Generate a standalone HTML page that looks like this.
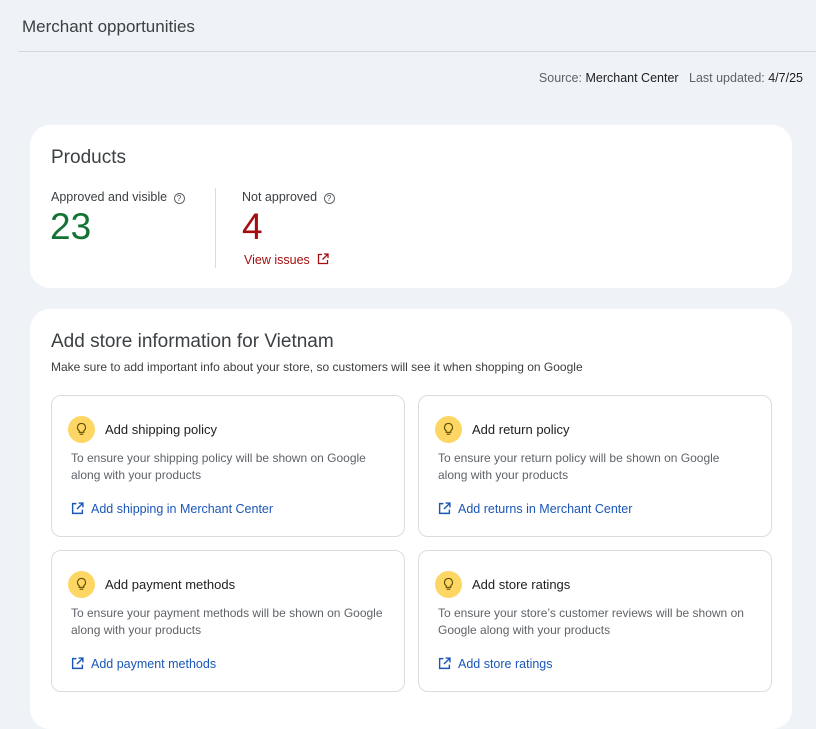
<!DOCTYPE html>
<html><head><meta charset="utf-8"><style>
*{box-sizing:border-box;margin:0;padding:0}
body{width:816px;height:709px;overflow:hidden;background:#eff2f7;font-family:"Liberation Sans",sans-serif;color:#202124;position:relative}
.abs{position:absolute;white-space:nowrap}
.card{position:absolute;background:#fff;border-radius:20px;left:30px;width:762px}
.ic{position:absolute;background:#fff;border:1px solid #dadce0;border-radius:10px;width:354px;height:142px}
.ic .circ{position:absolute;left:16px;top:20px;width:27px;height:27px;border-radius:50%;background:#fdd663}
.ic .circ svg{position:absolute;left:7px;top:6px}
.ic .h{position:absolute;left:53px;top:26px;font-size:13px;color:#202124}
.ic .b{position:absolute;left:19px;top:54px;font-size:12px;color:#5f6368;line-height:17px;width:315px}
.ic .l{position:absolute;left:19px;top:106px;font-size:12.5px;color:#1a56b8;white-space:nowrap}
.ic .l svg{vertical-align:-2px;margin-right:7px}
</style></head><body>
<div class="abs" style="left:22px;top:17px;font-size:17px;color:#3c4043">Merchant opportunities</div>
<div class="abs" style="left:18px;top:51px;width:798px;height:1px;background:#d5d8dc"></div>
<div class="abs" style="right:13px;top:71px;font-size:12.5px;color:#5f6368">Source: <span style="color:#202124">Merchant Center</span>&nbsp;&nbsp;&nbsp;Last updated: <span style="color:#202124">4/7/25</span></div>

<div class="card" style="top:125px;height:163px">
 <div class="abs" style="left:21px;top:22px;font-size:19px;color:#3c4043">Products</div>
 <div class="abs" style="left:21px;top:65px;font-size:12.5px;color:#3c4043">Approved and visible <span style="display:inline-block;width:11px;height:11px;border:1px solid #5f6368;border-radius:50%;font-size:8px;text-align:center;line-height:10px;margin-left:3px;vertical-align:0">?</span></div>
 <div class="abs" style="left:20px;top:81px;font-size:37px;color:#137333">23</div>
 <div class="abs" style="left:185px;top:63px;width:1px;height:80px;background:#dadce0"></div>
 <div class="abs" style="left:212px;top:65px;font-size:12.5px;color:#3c4043">Not approved <span style="display:inline-block;width:11px;height:11px;border:1px solid #5f6368;border-radius:50%;font-size:8px;text-align:center;line-height:10px;margin-left:3px;vertical-align:0">?</span></div>
 <div class="abs" style="left:212px;top:81px;font-size:37px;color:#a50e0e">4</div>
 <div class="abs" style="left:214px;top:128px;font-size:12.5px;color:#a50e0e">View issues <svg width="12" height="12" viewBox="0 0 12 12" style="margin-left:4px;vertical-align:-1px"><path d="M5 1.5H1.5v9h9V7M7 1h4v4M11 1 5.5 6.5" fill="none" stroke="#a50e0e" stroke-width="1.3"/></svg></div>
</div>

<div class="card" style="top:309px;height:420px">
 <div class="abs" style="left:21px;top:22px;font-size:19px;color:#3c4043">Add store information for Vietnam</div>
 <div class="abs" style="left:21px;top:51px;font-size:12px;color:#3c4043">Make sure to add important info about your store, so customers will see it when shopping on Google</div>
</div>

<svg width="0" height="0" style="position:absolute"><defs>
<symbol id="bulb" viewBox="0 0 14 16"><path d="M7 1.5a4.3 4.3 0 0 0-2.5 7.8V11h5V9.3A4.3 4.3 0 0 0 7 1.5zM5 13h4" fill="none" stroke="#5f4b00" stroke-width="1.2"/></symbol>
<symbol id="ext" viewBox="0 0 12 12"><path d="M5 1.5H1.5v9h9V7M7 1h4v4M11 1 5.5 6.5" fill="none" stroke="#1a56b8" stroke-width="1.3"/></symbol>
</defs></svg>

<div class="ic" style="left:51px;top:395px"><div class="circ"><svg width="13" height="15"><use href="#bulb"/></svg></div><div class="h">Add shipping policy</div><div class="b">To ensure your shipping policy will be shown on Google<br>along with your products</div><div class="l"><svg width="13" height="13"><use href="#ext"/></svg>Add shipping in Merchant Center</div></div>
<div class="ic" style="left:418px;top:395px"><div class="circ"><svg width="13" height="15"><use href="#bulb"/></svg></div><div class="h">Add return policy</div><div class="b">To ensure your return policy will be shown on Google<br>along with your products</div><div class="l"><svg width="13" height="13"><use href="#ext"/></svg>Add returns in Merchant Center</div></div>
<div class="ic" style="left:51px;top:550px"><div class="circ"><svg width="13" height="15"><use href="#bulb"/></svg></div><div class="h">Add payment methods</div><div class="b">To ensure your payment methods will be shown on Google<br>along with your products</div><div class="l"><svg width="13" height="13"><use href="#ext"/></svg>Add payment methods</div></div>
<div class="ic" style="left:418px;top:550px"><div class="circ"><svg width="13" height="15"><use href="#bulb"/></svg></div><div class="h">Add store ratings</div><div class="b">To ensure your store’s customer reviews will be shown on<br>Google along with your products</div><div class="l"><svg width="13" height="13"><use href="#ext"/></svg>Add store ratings</div></div>
</body></html>
